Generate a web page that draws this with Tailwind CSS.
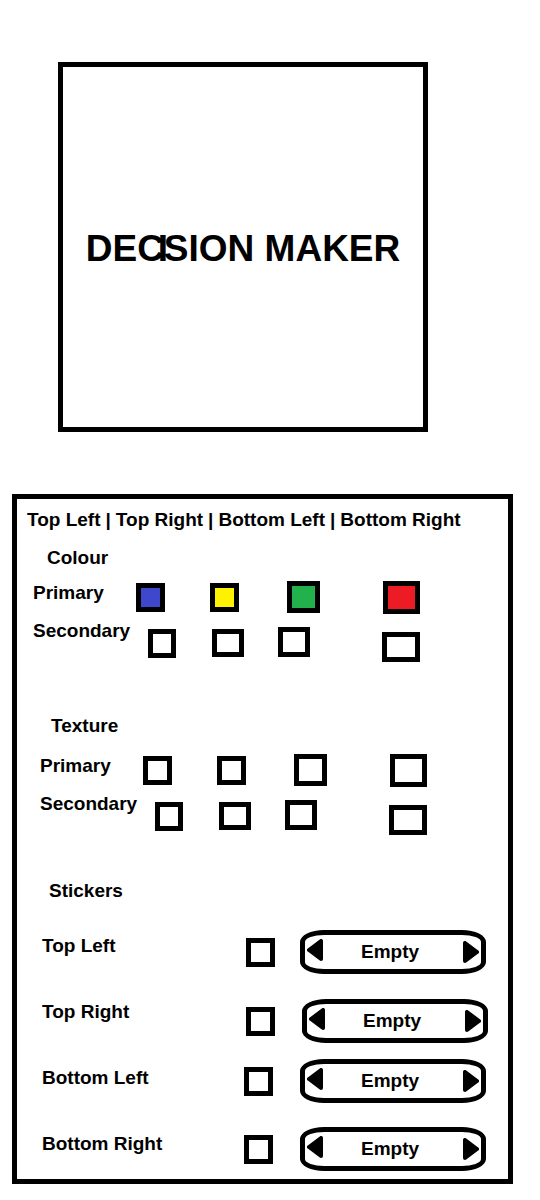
<!DOCTYPE html>
<html lang="en">
<head>
<meta charset="utf-8">
<meta name="viewport" content="width=device-width, initial-scale=1">
<title>Decision Maker</title>
<script src="https://cdn.jsdelivr.net/npm/@tailwindcss/browser@4"></script>
</head>
<body class="bg-white font-['Liberation_Sans',Arial,sans-serif] text-[19px] leading-6 font-bold text-black">
<main class="flex flex-col gap-[62px] pt-[62px] pr-[27px] pb-4 pl-3">
  <section class="ml-[46px] flex aspect-square w-[370px] max-w-full items-center justify-center border-5 border-black pt-1">
    <h1 class="text-[37px] leading-10 whitespace-nowrap">DEC<span class="-ml-[6px] inline-block w-[6px]">I</span>SION MAKER</h1>
  </section>

  <form class="border-5 border-black pt-[9px] pb-2">
    <nav class="flex gap-[5px] pl-[10px] whitespace-nowrap">
      <a href="#top-left">Top Left</a><span>|</span>
      <a href="#top-right">Top Right</a><span>|</span>
      <a href="#bottom-left">Bottom Left</a><span>|</span>
      <a href="#bottom-right">Bottom Right</a>
    </nav>

    <h2 class="mt-[14px] pl-[30px]">Colour</h2>
    <div class="mt-[11px] flex pl-4">
      <div class="flex w-[103px] shrink-0 flex-col gap-[14px]">
        <span id="colour-primary">Primary</span>
        <span id="colour-secondary">Secondary</span>
      </div>
      <div class="flex flex-col gap-[14px]">
        <div role="radiogroup" aria-labelledby="colour-primary" class="flex h-8 items-center">
          <input type="radio" name="cp" aria-label="Blue" class="h-[29px] w-[29px] appearance-none border-5 border-black bg-[#3f48cc]">
          <input type="radio" name="cp" aria-label="Yellow" class="ml-[45px] h-[29px] w-[29px] appearance-none border-5 border-black bg-[#fff200]">
          <input type="radio" name="cp" aria-label="Green" class="ml-12 h-[32px] w-[33px] appearance-none self-end border-5 border-black bg-[#22b14c]">
          <input type="radio" name="cp" aria-label="Red" class="ml-[63px] h-[33px] w-[37px] appearance-none self-start border-5 border-black bg-[#ed1c24]">
        </div>
        <div role="radiogroup" aria-labelledby="colour-secondary" class="flex h-[35px] items-start pl-3">
          <input type="radio" name="cs" aria-label="Option 1" class="mt-0.5 h-[29px] w-[28px] appearance-none border-5 border-black">
          <input type="radio" name="cs" aria-label="Option 2" class="mt-0.5 ml-9 h-[28px] w-[32px] appearance-none border-5 border-black">
          <input type="radio" name="cs" aria-label="Option 3" class="ml-[34px] h-[30px] w-[32px] appearance-none border-5 border-black">
          <input type="radio" name="cs" aria-label="Option 4" class="ml-[72px] h-[30px] w-[38px] appearance-none self-end border-5 border-black">
        </div>
      </div>
    </div>

    <h2 class="mt-[52px] pl-[34px]">Texture</h2>
    <div class="mt-4 flex pl-[23px]">
      <div class="flex w-[103px] shrink-0 flex-col gap-[14px]">
        <span id="texture-primary">Primary</span>
        <span id="texture-secondary">Secondary</span>
      </div>
      <div class="flex flex-col gap-[14px]">
        <div role="radiogroup" aria-labelledby="texture-primary" class="flex h-8 items-center">
          <input type="radio" name="tp" aria-label="Option 1" class="h-[29px] w-[29px] appearance-none border-5 border-black">
          <input type="radio" name="tp" aria-label="Option 2" class="ml-[45px] h-[29px] w-[29px] appearance-none border-5 border-black">
          <input type="radio" name="tp" aria-label="Option 3" class="ml-12 h-[32px] w-[33px] appearance-none self-end border-5 border-black">
          <input type="radio" name="tp" aria-label="Option 4" class="ml-[63px] h-[33px] w-[37px] appearance-none self-start border-5 border-black">
        </div>
        <div role="radiogroup" aria-labelledby="texture-secondary" class="flex h-[35px] items-start pl-3">
          <input type="radio" name="ts" aria-label="Option 1" class="mt-0.5 h-[29px] w-[28px] appearance-none border-5 border-black">
          <input type="radio" name="ts" aria-label="Option 2" class="mt-0.5 ml-9 h-[28px] w-[32px] appearance-none border-5 border-black">
          <input type="radio" name="ts" aria-label="Option 3" class="ml-[34px] h-[30px] w-[32px] appearance-none border-5 border-black">
          <input type="radio" name="ts" aria-label="Option 4" class="ml-[72px] h-[30px] w-[38px] appearance-none self-end border-5 border-black">
        </div>
      </div>
    </div>

    <h2 class="mt-[44px] pl-8">Stickers</h2>
    <div class="mt-[27px] flex pl-[25px]">
      <div class="flex w-[202px] shrink-0 flex-col gap-[42px] pt-1">
        <label for="sticker-tl">Top Left</label>
        <label for="sticker-tr">Top Right</label>
        <label for="sticker-bl">Bottom Left</label>
        <label for="sticker-br">Bottom Right</label>
      </div>
      <div class="flex flex-col">
        <div class="flex items-center gap-[25px] pl-[2px]">
          <input id="sticker-tl" type="checkbox" class="h-[29px] w-[29px] appearance-none border-5 border-black">
          <div class="flex h-[44px] w-[186px] items-center rounded-[24px/12px] border-5 border-black px-[2px]">
            <button type="button" aria-label="Previous" class="pb-1"><svg class="h-[22px] w-4" viewBox="0 0 16 22"><path d="M2 11 14 2V20Z" stroke="#000" stroke-width="4" stroke-linejoin="round"/></svg></button>
            <output class="flex-1 pr-[6px] text-center">Empty</output>
            <button type="button" aria-label="Next" class="pb-px"><svg class="h-[22px] w-4" viewBox="0 0 16 22"><path d="M14 11 2 2V20Z" stroke="#000" stroke-width="4" stroke-linejoin="round"/></svg></button>
          </div>
        </div>
        <div class="mt-[25px] flex items-center gap-[27px] pl-[2px]">
          <input id="sticker-tr" type="checkbox" class="h-[29px] w-[29px] appearance-none border-5 border-black">
          <div class="flex h-[44px] w-[186px] items-center rounded-[24px/12px] border-5 border-black px-[2px]">
            <button type="button" aria-label="Previous" class="pb-1"><svg class="h-[22px] w-4" viewBox="0 0 16 22"><path d="M2 11 14 2V20Z" stroke="#000" stroke-width="4" stroke-linejoin="round"/></svg></button>
            <output class="flex-1 pr-[6px] text-center">Empty</output>
            <button type="button" aria-label="Next" class="pb-px"><svg class="h-[22px] w-4" viewBox="0 0 16 22"><path d="M14 11 2 2V20Z" stroke="#000" stroke-width="4" stroke-linejoin="round"/></svg></button>
          </div>
        </div>
        <div class="mt-4 flex items-center gap-[27px]">
          <input id="sticker-bl" type="checkbox" class="h-[29px] w-[29px] appearance-none border-5 border-black">
          <div class="flex h-[44px] w-[186px] items-center rounded-[24px/12px] border-5 border-black px-[2px]">
            <button type="button" aria-label="Previous" class="pb-1"><svg class="h-[22px] w-4" viewBox="0 0 16 22"><path d="M2 11 14 2V20Z" stroke="#000" stroke-width="4" stroke-linejoin="round"/></svg></button>
            <output class="flex-1 pr-[6px] text-center">Empty</output>
            <button type="button" aria-label="Next" class="pb-px"><svg class="h-[22px] w-4" viewBox="0 0 16 22"><path d="M14 11 2 2V20Z" stroke="#000" stroke-width="4" stroke-linejoin="round"/></svg></button>
          </div>
        </div>
        <div class="mt-6 flex items-center gap-[27px]">
          <input id="sticker-br" type="checkbox" class="h-[29px] w-[29px] appearance-none border-5 border-black">
          <div class="flex h-[44px] w-[186px] items-center rounded-[24px/12px] border-5 border-black px-[2px]">
            <button type="button" aria-label="Previous" class="pb-1"><svg class="h-[22px] w-4" viewBox="0 0 16 22"><path d="M2 11 14 2V20Z" stroke="#000" stroke-width="4" stroke-linejoin="round"/></svg></button>
            <output class="flex-1 pr-[6px] text-center">Empty</output>
            <button type="button" aria-label="Next" class="pb-px"><svg class="h-[22px] w-4" viewBox="0 0 16 22"><path d="M14 11 2 2V20Z" stroke="#000" stroke-width="4" stroke-linejoin="round"/></svg></button>
          </div>
        </div>
      </div>
    </div>
  </form>
</main>
</body>
</html>
